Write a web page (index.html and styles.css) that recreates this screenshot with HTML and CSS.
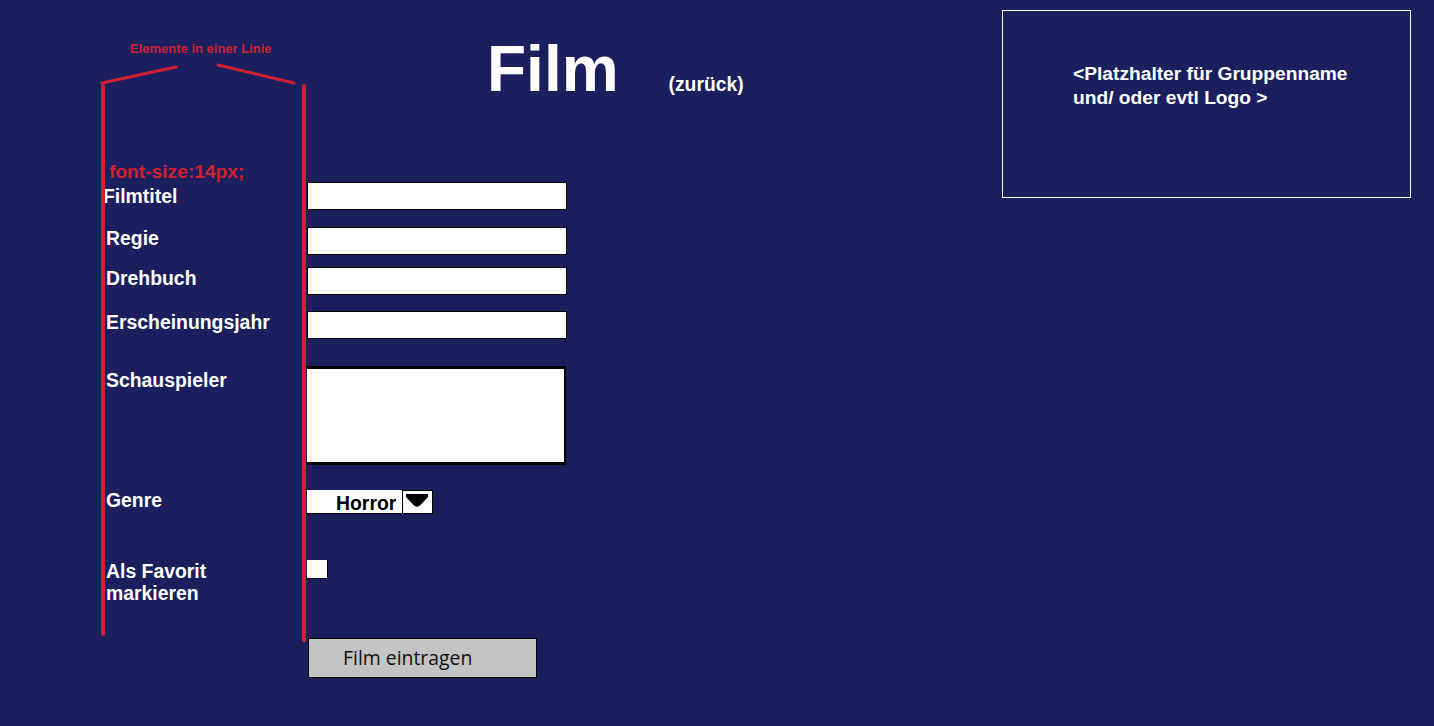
FILE: index.html
```html
<!DOCTYPE html>
<html lang="de">
<head>
<meta charset="utf-8">
<title>Film</title>
<link rel="stylesheet" href="styles.css">
</head>
<body>
<div class="page">
  <main class="main">
    <header class="header">
      <h1 class="title">Film</h1>
      <a class="back" href="#">(zurück)</a>
    </header>
    <form class="form">
      <div class="row row-1">
        <label class="label label-first">Filmtitel</label>
        <input class="field" type="text">
      </div>
      <div class="row row-2">
        <label class="label">Regie</label>
        <input class="field" type="text">
      </div>
      <div class="row row-3">
        <label class="label">Drehbuch</label>
        <input class="field" type="text">
      </div>
      <div class="row row-4">
        <label class="label">Erscheinungsjahr</label>
        <input class="field" type="text">
      </div>
      <div class="row row-5">
        <label class="label label-tall">Schauspieler</label>
        <textarea class="area"></textarea>
      </div>
      <div class="row row-6">
        <label class="label label-genre">Genre</label>
        <div class="select">
          <span class="select-value">Horror</span>
          <span class="select-btn"><svg width="22" height="13" viewBox="0 0 22 13"><path d="M0 0H22V3L14 11.5Q11 13.8 8 11.5L0 3Z" fill="#000"/></svg></span>
        </div>
      </div>
      <div class="row row-7">
        <label class="label">Als Favorit<br>markieren</label>
        <span class="check"></span>
      </div>
      <div class="row row-8">
        <span class="label"></span>
        <button class="submit" type="button">Film eintragen</button>
      </div>
    </form>
  </main>
  <aside class="logo">&lt;Platzhalter für Gruppenname<br>und/ oder evtl Logo &gt;</aside>
</div>

<div class="notes">
  <span class="note note-line">Elemente in einer Linie</span>
  <span class="note note-size">font-size:14px;</span>
  <svg class="note-svg" width="1434" height="726" viewBox="0 0 1434 726">
    <g stroke="#d0202f" fill="none">
      <line x1="103" y1="86" x2="103" y2="634" stroke-width="4" stroke-linecap="round"/>
      <line x1="304" y1="86" x2="304" y2="640" stroke-width="4" stroke-linecap="round"/>
      <line x1="102" y1="83" x2="176" y2="67" stroke-width="3" stroke-linecap="round"/>
      <line x1="218" y1="65" x2="294" y2="83" stroke-width="3" stroke-linecap="round"/>
    </g>
  </svg>
</div>
</body>
</html>
```
FILE: styles.css
```css
html, body {
  margin: 0;
  padding: 0;
}

body {
  background: #1c1f5e;
  color: #fff;
  font-family: "Liberation Sans", Arial, sans-serif;
  width: 1434px;
  height: 726px;
  overflow: hidden;
  position: relative;
}

.page {
  display: flex;
  padding: 10px 23px 0 0;
}

.main {
  flex: 1;
}

.header {
  display: flex;
  align-items: baseline;
  padding: 26px 0 0 487px;
}

.title {
  margin: 0;
  font-size: 64px;
  line-height: 66px;
  font-weight: bold;
}

.back {
  margin-left: 50px;
  color: #fff;
  text-decoration: none;
  font-size: 19.3px;
  font-weight: bold;
}

.form {
  margin-top: 80px;
  padding-left: 106px;
}

.row {
  display: flex;
  align-items: flex-start;
}

.label {
  width: 201px;
  flex: none;
  font-size: 19.4px;
  line-height: 22px;
  font-weight: bold;
  padding-top: 0;
}

.label-first {
  padding-top: 3px;
  margin-left: -3px;
  width: 204px;
}

.label-tall {
  padding-top: 3px;
}

.label-genre {
  margin-top: -1px;
}

.row-2 { margin-top: 17px; }
.row-3 { margin-top: 12px; }
.row-4 { margin-top: 16px; }
.row-5 { margin-top: 27px; }
.row-6 { margin-top: 25px; }
.row-7 { margin-top: 46px; }
.row-8 { margin-top: 34px; }

.field {
  box-sizing: border-box;
  width: 260px;
  height: 28px;
  margin: 0;
  border: 1px solid #000;
  background: #fff;
  padding: 0 4px;
}

.area {
  box-sizing: border-box;
  width: 259px;
  height: 99px;
  margin: 0;
  border: 0;
  border-top: 3px solid #000;
  border-bottom: 3px solid #000;
  border-right: 2px solid #000;
  background: #fff;
  resize: none;
}

.select {
  display: flex;
  box-sizing: border-box;
  width: 126px;
  height: 24px;
  background: #fff;
  border-right: 1px solid #000;
  border-bottom: 1px solid #000;
}

.select-value {
  width: 96px;
  box-sizing: border-box;
  padding: 2px 0 0 29px;
  border-right: 1px solid #000;
  color: #000;
  font-size: 19.4px;
  line-height: 22px;
  font-weight: bold;
}

.select-btn {
  flex: 1;
  box-sizing: border-box;
  border-top: 1px solid #000;
  padding: 3px 0 0 3px;
}

.select-btn svg {
  display: block;
}

.check {
  display: block;
  box-sizing: border-box;
  width: 21px;
  height: 19px;
  background: #fff;
  border-right: 1px solid #000;
  border-bottom: 1px solid #000;
}

.submit {
  box-sizing: border-box;
  width: 229px;
  height: 40px;
  margin: 0 0 0 1px;
  padding: 0 0 0 34px;
  text-align: left;
  background: #c3c3c3;
  border: 1px solid #000;
  color: #111;
  font-family: "Open Sans", "Liberation Sans", sans-serif;
  font-size: 19.4px;
  line-height: 38px;
}

.logo {
  box-sizing: border-box;
  width: 409px;
  height: 188px;
  border: 1px solid #fff;
  padding: 51px 0 0 70px;
  font-size: 19.2px;
  line-height: 24px;
  font-weight: bold;
}

.notes {
  position: absolute;
  left: 0;
  top: 0;
  width: 1434px;
  height: 726px;
  pointer-events: none;
}

.note-svg {
  position: absolute;
  left: 0;
  top: 0;
}

.note {
  position: absolute;
  color: #d0202f;
  font-weight: bold;
  white-space: nowrap;
}

.note-line {
  left: 130px;
  top: 41px;
  font-size: 13px;
  line-height: 15px;
}

.note-size {
  left: 109px;
  top: 161px;
  font-size: 19.2px;
  line-height: 22px;
}
```
